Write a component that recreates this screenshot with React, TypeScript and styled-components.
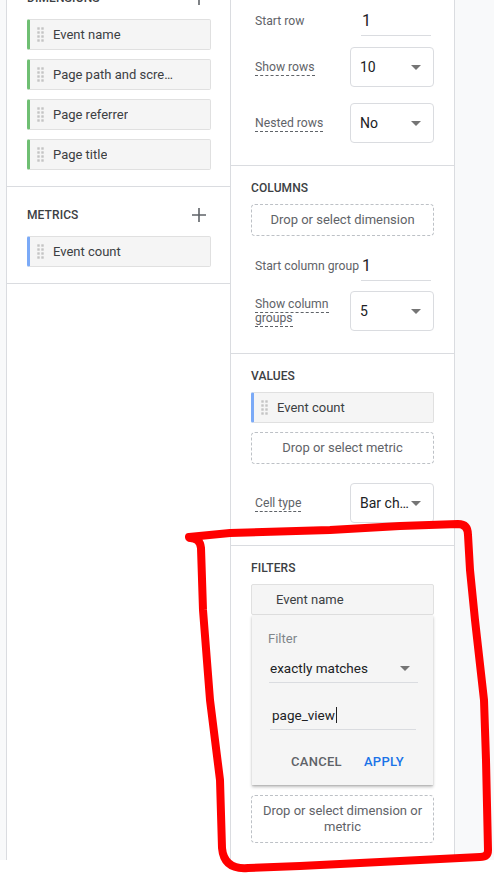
import React from 'react';
import styled, { createGlobalStyle } from 'styled-components';

const colors = {
  text: '#3c4043',
  label: '#5f6368',
  value: '#202124',
  line: '#dadce0',
  chip: '#f5f5f5',
  chipBorder: '#e0e0e0',
  rail: '#f8f9fa',
  green: '#6fbf73',
  blue: '#7baaf7',
  link: '#1a73e8',
};

const GlobalStyle = createGlobalStyle`
  html, body {
    margin: 0;
    padding: 0;
    background: #fff;
    overflow: hidden;
  }
  body {
    font-family: Roboto, 'Liberation Sans', Arial, sans-serif;
    font-size: 13px;
    color: ${colors.text};
  }
`;

const Page = styled.div`
  position: relative;
  width: 494px;
  height: 873px;
  overflow: hidden;
`;

const Columns = styled.div`
  display: flex;
  height: 860px;
`;

const Rail = styled.div`
  width: 6px;
  background: ${colors.rail};
  border-right: 1px solid ${colors.line};
`;

const Panel = styled.div`
  width: 223px;
  border-right: 1px solid ${colors.line};
  display: flex;
  flex-direction: column;
`;

const Filler = styled.div`
  flex: 1;
  background: ${colors.rail};
`;

const Section = styled.div<{ $top?: number; $bottom?: number; $left?: number; $right?: number }>`
  padding: ${(p) => p.$top ?? 14}px ${(p) => p.$right ?? 20}px ${(p) => p.$bottom ?? 22}px
    ${(p) => p.$left ?? 20}px;
  display: flex;
  flex-direction: column;
`;

const Divider = styled.div`
  height: 1px;
  background: ${colors.line};
  flex-shrink: 0;
`;

const Header = styled.div<{ $gap?: number; $shift?: number }>`
  display: flex;
  align-items: center;
  justify-content: space-between;
  height: 16px;
  margin-top: ${(p) => p.$shift ?? 0}px;
  margin-bottom: ${(p) => p.$gap ?? 8}px;
  font-size: 12px;
  font-weight: 500;
  color: ${colors.text};
  letter-spacing: 0.1px;
`;

const PlusButton = styled.span`
  display: flex;
  width: 14px;
  height: 14px;
  margin-right: 5px;
`;

const ChipList = styled.div`
  display: flex;
  flex-direction: column;
  gap: 9px;
`;

const Chip = styled.div<{ $bar?: string; $indent?: number }>`
  display: flex;
  align-items: center;
  height: 31px;
  box-sizing: border-box;
  background: ${colors.chip};
  border: 1px solid ${colors.chipBorder};
  border-left: ${(p) => (p.$bar ? `3px solid ${p.$bar}` : `1px solid ${colors.chipBorder}`)};
  border-radius: 2px;
  padding-left: ${(p) => p.$indent ?? 7}px;
  padding-right: 33px;
  font-size: 13px;
  color: ${colors.text};
`;

const ChipText = styled.span`
  white-space: nowrap;
  overflow: hidden;
  text-overflow: ellipsis;
`;

const Handle = styled.svg`
  flex-shrink: 0;
  margin-right: 8px;
`;

const DropZone = styled.div<{ $pad?: number }>`
  flex: 1;
  box-sizing: border-box;
  min-height: 32px;
  padding: ${(p) => p.$pad ?? 0}px 10px;
  display: flex;
  align-items: center;
  justify-content: center;
  text-align: center;
  border: 1px dashed #bdc1c6;
  border-radius: 4px;
  font-size: 13px;
  line-height: 16px;
  color: ${colors.label};
`;

const Row = styled.div<{ $gap?: number }>`
  display: flex;
  align-items: center;
  justify-content: space-between;
  margin-top: ${(p) => p.$gap ?? 0}px;
`;

const Label = styled.div<{ $max?: number }>`
  padding-left: 4px;
  max-width: ${(p) => p.$max ?? 140}px;
  white-space: ${(p) => (p.$max ? 'normal' : 'nowrap')};
  font-size: 12.2px;
  line-height: 14px;
  color: ${colors.label};
`;

const Dashed = styled.span`
  border-bottom: 1px dashed ${colors.label};
  padding-bottom: 1px;
`;

const TextInput = styled.div`
  box-sizing: border-box;
  width: 70px;
  height: 30px;
  margin-right: 3px;
  line-height: 29px;
  border-bottom: 1px solid ${colors.line};
  font-size: 16px;
  color: ${colors.value};
  padding-left: 1px;
`;

const SelectBox = styled.div`
  box-sizing: border-box;
  width: 84px;
  height: 40px;
  border: 1px solid ${colors.line};
  border-radius: 4px;
  padding: 0 12px 0 9px;
  display: flex;
  align-items: center;
  justify-content: space-between;
  font-size: 14px;
  color: ${colors.value};
`;

const SelectText = styled.span`
  max-width: 50px;
  white-space: nowrap;
  overflow: hidden;
  text-overflow: ellipsis;
`;

const Popup = styled.div`
  margin: 0 1px;
  padding: 16px 15px 6px 16px;
  background: ${colors.chip};
  box-shadow: 0 2px 3px rgba(0, 0, 0, 0.25), 0 1px 1px rgba(0, 0, 0, 0.08);
  display: flex;
  flex-direction: column;
`;

const PopupLabel = styled.div`
  font-size: 13px;
  line-height: 16px;
  color: #80868b;
`;

const LineSelect = styled.div`
  box-sizing: border-box;
  height: 29px;
  margin: 7px 0 0 1px;
  padding: 0 8px 0 1px;
  display: flex;
  align-items: center;
  justify-content: space-between;
  border-bottom: 1px solid ${colors.line};
  font-size: 13.5px;
  color: ${colors.value};
`;

const LineInput = styled.div`
  box-sizing: border-box;
  height: 29px;
  margin: 18px 2px 0 2px;
  padding-left: 2px;
  display: flex;
  align-items: center;
  border-bottom: 1px solid ${colors.line};
  font-size: 13.5px;
  color: ${colors.value};
`;

const Caret = styled.span`
  display: inline-block;
  width: 1px;
  height: 16px;
  margin-left: 1px;
  background: ${colors.value};
`;

const Actions = styled.div`
  display: flex;
  justify-content: flex-end;
  gap: 6px;
  margin-top: 13px;
  padding-right: 6px;
`;

const TextButton = styled.button<{ $primary?: boolean }>`
  height: 36px;
  padding: 0 8px;
  border: 0;
  background: transparent;
  font-family: inherit;
  font-size: 13px;
  font-weight: 500;
  letter-spacing: 0.3px;
  color: ${(p) => (p.$primary ? colors.link : colors.label)};
`;

const Overlay = styled.svg`
  position: absolute;
  left: 0;
  top: 0;
  pointer-events: none;
`;

const DragDots = () => (
  <Handle width="8" height="15" viewBox="0 0 8 15">
    {[1.5, 5.5, 9.5, 13.5].map((y) =>
      [1.5, 5.5].map((x) => <rect key={`${x}-${y}`} x={x - 1.2} y={y - 1.2} width="2.4" height="2.4" fill="#c4c4c4" />)
    )}
  </Handle>
);

const Plus = () => (
  <PlusButton>
    <svg width="14" height="14" viewBox="0 0 14 14">
      <path d="M7 0v14M0 7h14" stroke="#5f6368" strokeWidth="1.6" />
    </svg>
  </PlusButton>
);

const Arrow = () => (
  <svg width="10" height="5" viewBox="0 0 10 5">
    <path d="M0 0h10L5 5z" fill="#757575" />
  </svg>
);

const Select = ({ value }: { value: string }) => (
  <SelectBox>
    <SelectText>{value}</SelectText>
    <Arrow />
  </SelectBox>
);

type FieldProps = { label: string; dashed?: boolean; children: React.ReactNode; gap?: number; max?: number };

const Field = ({ label, dashed = true, children, gap, max }: FieldProps) => (
  <Row $gap={gap}>
    <Label $max={max}>{dashed ? <Dashed>{label}</Dashed> : label}</Label>
    {children}
  </Row>
);

const dimensions = ['Event name', 'Page path and screen class', 'Page referrer', 'Page title'];

export default function App() {
  return (
    <Page>
      <GlobalStyle />
      <Columns>
        <Rail />
        <Panel>
          <Section $top={1} $bottom={16} $left={20} $right={19}>
            <Header $shift={-11} $gap={13}>
              DIMENSIONS
              <Plus />
            </Header>
            <ChipList>
              {dimensions.map((d) => (
                <Chip key={d} $bar={colors.green}>
                  <DragDots />
                  <ChipText>{d}</ChipText>
                </Chip>
              ))}
            </ChipList>
          </Section>
          <Divider />
          <Section $top={20} $bottom={16} $left={20} $right={19}>
            <Header $gap={13}>
              METRICS
              <Plus />
            </Header>
            <Chip $bar={colors.blue}>
              <DragDots />
              <ChipText>Event count</ChipText>
            </Chip>
          </Section>
          <Divider />
        </Panel>

        <Panel>
          <Section $top={6} $bottom={22}>
            <Field label="Start row" dashed={false}>
              <TextInput>1</TextInput>
            </Field>
            <Field label="Show rows" gap={11}>
              <Select value="10" />
            </Field>
            <Field label="Nested rows" gap={16}>
              <Select value="No" />
            </Field>
          </Section>
          <Divider />
          <Section>
            <Header>COLUMNS</Header>
            <Row>
              <DropZone>Drop or select dimension</DropZone>
            </Row>
            <Field label="Start column group" dashed={false} gap={15}>
              <TextInput>1</TextInput>
            </Field>
            <Field label="Show column groups" gap={10} max={82}>
              <Select value="5" />
            </Field>
          </Section>
          <Divider />
          <Section>
            <Header>VALUES</Header>
            <Chip $bar={colors.blue}>
              <DragDots />
              <ChipText>Event count</ChipText>
            </Chip>
            <Row $gap={9}>
              <DropZone>Drop or select metric</DropZone>
            </Row>
            <Field label="Cell type" gap={19}>
              <Select value="Bar chart" />
            </Field>
          </Section>
          <Divider />
          <Section $bottom={0}>
            <Header>FILTERS</Header>
            <Chip $indent={24}>
              <ChipText>Event name</ChipText>
            </Chip>
            <Popup>
              <PopupLabel>Filter</PopupLabel>
              <LineSelect>
                exactly matches
                <Arrow />
              </LineSelect>
              <LineInput>
                page_view
                <Caret />
              </LineInput>
              <Actions>
                <TextButton>CANCEL</TextButton>
                <TextButton $primary>APPLY</TextButton>
              </Actions>
            </Popup>
            <Row $gap={10}>
              <DropZone $pad={7}>Drop or select dimension or metric</DropZone>
            </Row>
          </Section>
        </Panel>
        <Filler />
      </Columns>

      <Overlay width="494" height="873" viewBox="0 0 494 873">
        <path
          d="M189 537 L230 533 L330 530 L400 526 L458 524 Q468 524 468 535 L470 570 L475 620 L484 700 L486 760 L488 850 Q488 857 480 857 L440 859 L380 862 L300 866 L248 868 Q224 870 222 848 L220 780 L210 700 L203 610 L201 548 Q200 538 190 538"
          fill="none"
          stroke="#ff0000"
          strokeWidth="8"
          strokeLinejoin="round"
          strokeLinecap="round"
        />
      </Overlay>
    </Page>
  );
}
